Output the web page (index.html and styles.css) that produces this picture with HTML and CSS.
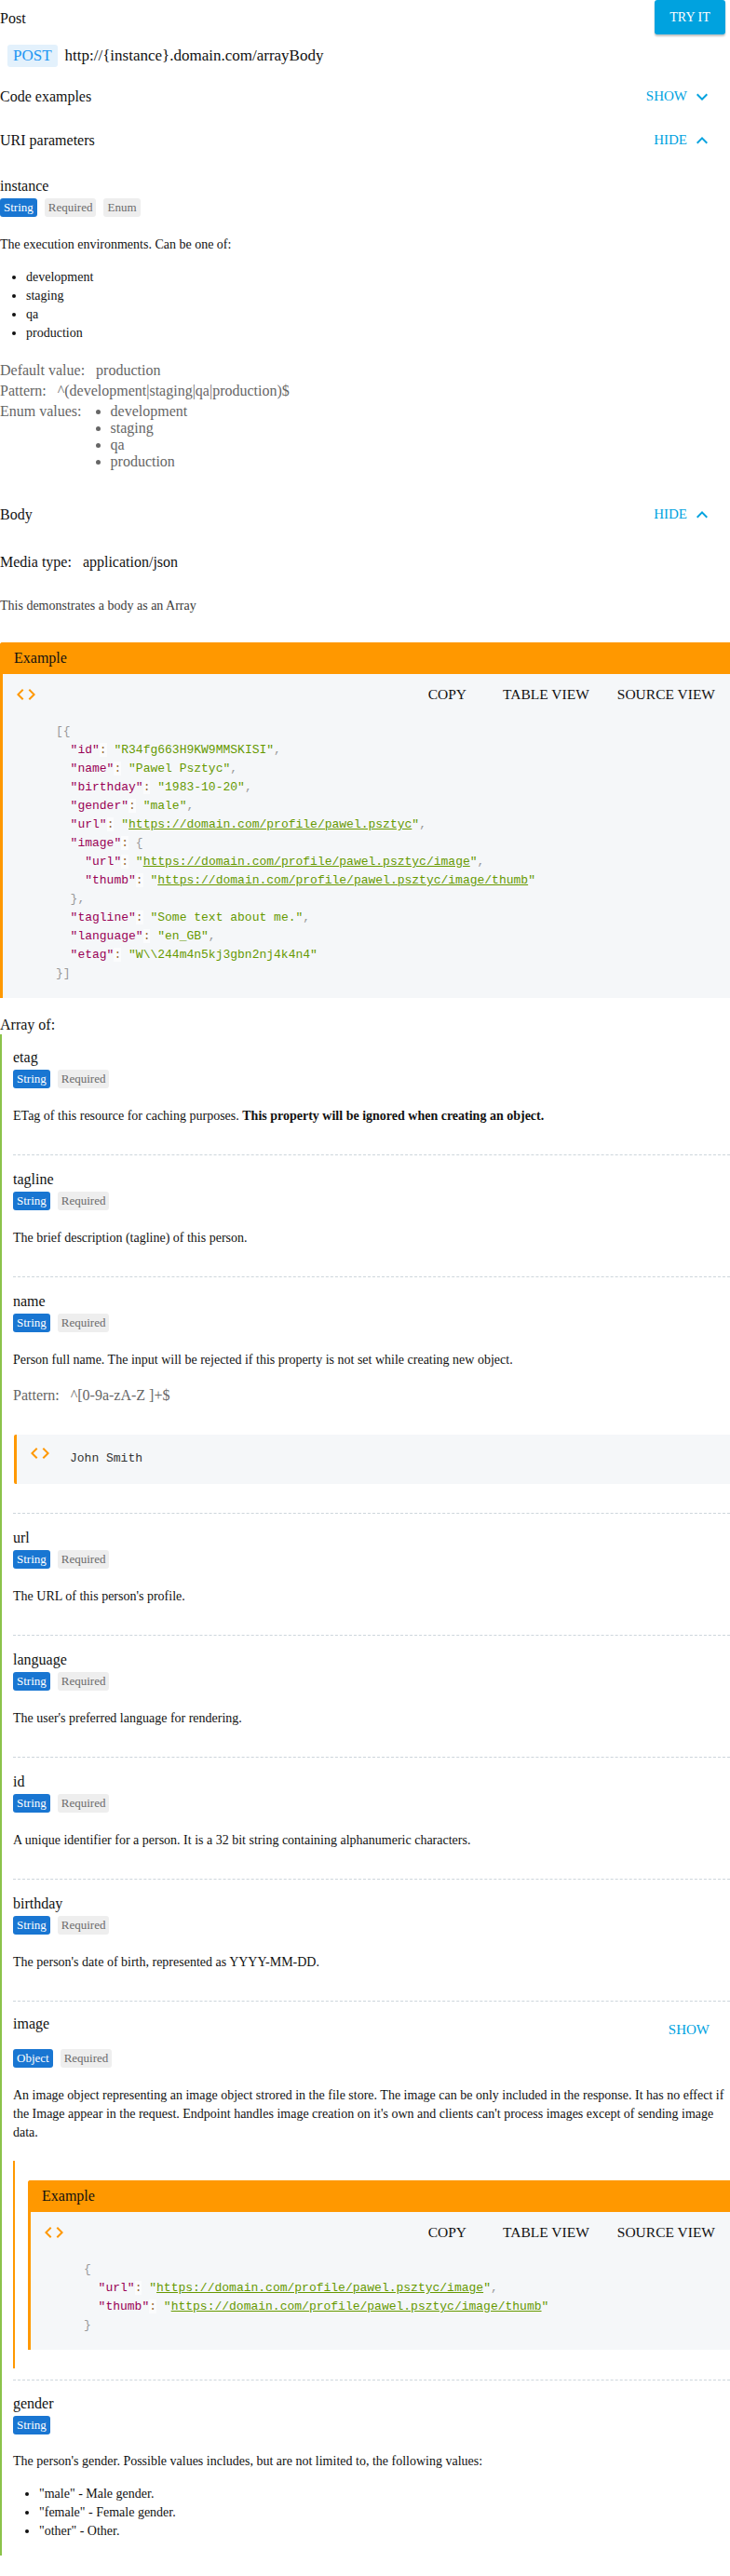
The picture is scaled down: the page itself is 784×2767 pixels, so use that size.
FILE: index.html
```html
<!DOCTYPE html>
<html lang="en">
<head>
<meta charset="utf-8">
<title>Post</title>
<link rel="stylesheet" href="styles.css">
</head>
<body>
<header class="top">
  <h1 class="title">Post</h1>
  <button class="try-it">TRY IT</button>
</header>
<div class="url-row">
  <span class="method">POST</span>
  <span class="url">http://{instance}.domain.com/arrayBody</span>
</div>

<div class="section-head first">
  <span class="section-title">Code examples</span>
  <span class="toggle">SHOW <svg viewBox="0 0 24 24"><path d="M16.59 8.59L12 13.17 7.41 8.59 6 10l6 6 6-6z"/></svg></span>
</div>
<div class="section-head">
  <span class="section-title">URI parameters</span>
  <span class="toggle">HIDE <svg viewBox="0 0 24 24"><path d="M12 8l-6 6 1.41 1.41L12 10.83l4.59 4.58L18 14z"/></svg></span>
</div>

<div class="param">
  <div class="prop-name">instance</div>
  <div class="badges"><span class="badge type">String</span><span class="badge flag">Required</span><span class="badge flag">Enum</span></div>
  <p class="prop-desc">The execution environments. Can be one of:</p>
  <ul class="text-list">
    <li>development</li>
    <li>staging</li>
    <li>qa</li>
    <li>production</li>
  </ul>
  <div class="details">
    <div class="detail-row"><span class="label">Default value:</span><span>production</span></div>
    <div class="detail-row"><span class="label">Pattern:</span><span>^(development|staging|qa|production)$</span></div>
    <div class="detail-row"><span class="label">Enum values:</span>
      <ul class="enum-list"><li>development</li><li>staging</li><li>qa</li><li>production</li></ul>
    </div>
  </div>
</div>

<div class="section-head body-head">
  <span class="section-title">Body</span>
  <span class="toggle">HIDE <svg viewBox="0 0 24 24"><path d="M12 8l-6 6 1.41 1.41L12 10.83l4.59 4.58L18 14z"/></svg></span>
</div>
<div class="media-row"><span class="label">Media type:</span><span>application/json</span></div>
<p class="media-desc">This demonstrates a body as an Array</p>

<section class="example main-example">
  <div class="example-head">Example</div>
  <div class="example-body">
    <div class="example-bar">
      <svg class="code-icon" viewBox="0 0 24 24"><path d="M9.4 16.6L4.8 12l4.6-4.6L8 6l-6 6 6 6 1.4-1.4zm5.2 0l4.6-4.6-4.6-4.6L16 6l6 6-6 6-1.4-1.4z"/></svg>
      <div class="actions"><button class="btn copy">Copy</button><button class="btn">Table view</button><button class="btn">Source view</button></div>
    </div>
<pre class="code"><span class="p">[{</span>
  <span class="k">"id"</span><span class="o">:</span> <span class="s">"R34fg663H9KW9MMSKISI"</span><span class="p">,</span>
  <span class="k">"name"</span><span class="o">:</span> <span class="s">"Pawel Psztyc"</span><span class="p">,</span>
  <span class="k">"birthday"</span><span class="o">:</span> <span class="s">"1983-10-20"</span><span class="p">,</span>
  <span class="k">"gender"</span><span class="o">:</span> <span class="s">"male"</span><span class="p">,</span>
  <span class="k">"url"</span><span class="o">:</span> <span class="s">"<a>https://domain.com/profile/pawel.psztyc</a>"</span><span class="p">,</span>
  <span class="k">"image"</span><span class="o">:</span> <span class="p">{</span>
    <span class="k">"url"</span><span class="o">:</span> <span class="s">"<a>https://domain.com/profile/pawel.psztyc/image</a>"</span><span class="p">,</span>
    <span class="k">"thumb"</span><span class="o">:</span> <span class="s">"<a>https://domain.com/profile/pawel.psztyc/image/thumb</a>"</span>
  <span class="p">},</span>
  <span class="k">"tagline"</span><span class="o">:</span> <span class="s">"Some text about me."</span><span class="p">,</span>
  <span class="k">"language"</span><span class="o">:</span> <span class="s">"en_GB"</span><span class="p">,</span>
  <span class="k">"etag"</span><span class="o">:</span> <span class="s">"W\\244m4n5kj3gbn2nj4k4n4"</span>
<span class="p">}]</span></pre>
  </div>
</section>

<div class="array-of">Array of:</div>
<div class="props">
  <div class="prop">
    <div class="prop-name">etag</div>
    <div class="badges"><span class="badge type">String</span><span class="badge flag">Required</span></div>
    <p class="prop-desc">ETag of this resource for caching purposes. <b>This property will be ignored when creating an object.</b></p>
  </div>
  <div class="prop">
    <div class="prop-name">tagline</div>
    <div class="badges"><span class="badge type">String</span><span class="badge flag">Required</span></div>
    <p class="prop-desc">The brief description (tagline) of this person.</p>
  </div>
  <div class="prop">
    <div class="prop-name">name</div>
    <div class="badges"><span class="badge type">String</span><span class="badge flag">Required</span></div>
    <p class="prop-desc">Person full name. The input will be rejected if this property is not set while creating new object.</p>
    <div class="pattern"><span class="label">Pattern:</span><span>^[0-9a-zA-Z ]+$</span></div>
    <div class="value-box">
      <svg class="code-icon" viewBox="0 0 24 24"><path d="M9.4 16.6L4.8 12l4.6-4.6L8 6l-6 6 6 6 1.4-1.4zm5.2 0l4.6-4.6-4.6-4.6L16 6l6 6-6 6-1.4-1.4z"/></svg>
      <pre class="value">John Smith</pre>
    </div>
  </div>
  <div class="prop">
    <div class="prop-name">url</div>
    <div class="badges"><span class="badge type">String</span><span class="badge flag">Required</span></div>
    <p class="prop-desc">The URL of this person's profile.</p>
  </div>
  <div class="prop">
    <div class="prop-name">language</div>
    <div class="badges"><span class="badge type">String</span><span class="badge flag">Required</span></div>
    <p class="prop-desc">The user's preferred language for rendering.</p>
  </div>
  <div class="prop">
    <div class="prop-name">id</div>
    <div class="badges"><span class="badge type">String</span><span class="badge flag">Required</span></div>
    <p class="prop-desc">A unique identifier for a person. It is a 32 bit string containing alphanumeric characters.</p>
  </div>
  <div class="prop">
    <div class="prop-name">birthday</div>
    <div class="badges"><span class="badge type">String</span><span class="badge flag">Required</span></div>
    <p class="prop-desc">The person's date of birth, represented as YYYY-MM-DD.</p>
  </div>
  <div class="prop prop-object">
    <div class="prop-head">
      <div class="prop-name">image</div>
      <span class="show-btn">SHOW</span>
    </div>
    <div class="badges"><span class="badge type">Object</span><span class="badge flag">Required</span></div>
    <p class="prop-desc">An image object representing an image object strored in the file store. The image can be only included in the response. It has no effect if the Image appear in the request. Endpoint handles image creation on it's own and clients can't process images except of sending image data.</p>
    <div class="obj-example">
      <section class="example">
        <div class="example-head">Example</div>
        <div class="example-body">
          <div class="example-bar">
            <svg class="code-icon" viewBox="0 0 24 24"><path d="M9.4 16.6L4.8 12l4.6-4.6L8 6l-6 6 6 6 1.4-1.4zm5.2 0l4.6-4.6-4.6-4.6L16 6l6 6-6 6-1.4-1.4z"/></svg>
            <div class="actions"><button class="btn copy">Copy</button><button class="btn">Table view</button><button class="btn">Source view</button></div>
          </div>
<pre class="code"><span class="p">{</span>
  <span class="k">"url"</span><span class="o">:</span> <span class="s">"<a>https://domain.com/profile/pawel.psztyc/image</a>"</span><span class="p">,</span>
  <span class="k">"thumb"</span><span class="o">:</span> <span class="s">"<a>https://domain.com/profile/pawel.psztyc/image/thumb</a>"</span>
<span class="p">}</span></pre>
        </div>
      </section>
    </div>
  </div>
  <div class="prop">
    <div class="prop-name">gender</div>
    <div class="badges"><span class="badge type">String</span></div>
    <p class="prop-desc gender-desc">The person's gender. Possible values includes, but are not limited to, the following values:</p>
    <ul class="text-list">
      <li>"male" - Male gender.</li>
      <li>"female" - Female gender.</li>
      <li>"other" - Other.</li>
    </ul>
  </div>
</div>
</body>
</html>
```

FILE: styles.css
```css
html, body {
  margin: 0;
  padding: 0;
}
body {
  width: 784px;
  font-family: "Liberation Serif", "Times New Roman", serif;
  font-size: 16px;
  color: #111;
  background: #fff;
  padding-bottom: 17px;
}
p, ul, h1, pre {
  margin: 0;
}

/* header */
.top {
  display: flex;
  justify-content: space-between;
  align-items: flex-start;
  height: 38px;
}
.title {
  font-size: 16px;
  font-weight: normal;
  line-height: 40px;
}
.try-it {
  width: 76px;
  height: 37px;
  margin-right: 5px;
  border: 0;
  border-radius: 3px;
  background: #00a2df;
  color: #fff;
  font-family: "Liberation Serif", "Times New Roman", serif;
  font-size: 14px;
  box-shadow: 0 2px 2px rgba(0, 0, 0, 0.24);
  padding: 0;
}
.url-row {
  display: flex;
  align-items: center;
  gap: 8px;
  margin-top: 10px;
  font-size: 17px;
}
.method {
  height: 24px;
  line-height: 24px;
  padding: 0 6px;
  margin-left: 8px;
  border-radius: 3px;
  background: #e3f1fc;
  color: #2196f3;
}

/* section headers */
.section-head {
  display: flex;
  align-items: center;
  justify-content: space-between;
  height: 47px;
}
.section-head.first {
  margin-top: 8px;
}
.section-head.body-head {
  margin-top: 24px;
}
.toggle {
  display: flex;
  align-items: center;
  color: #00a2df;
  font-size: 15px;
  margin-right: 18px;
}
.toggle svg {
  width: 24px;
  height: 24px;
  margin-left: 4px;
  fill: #00a2df;
}

/* params */
.param {
  margin-top: 16px;
}
.prop-name {
  font-size: 16px;
  line-height: 20px;
}
.badges {
  display: flex;
  gap: 8px;
  margin-top: 3px;
}
.badge {
  height: 20px;
  line-height: 20px;
  padding: 0 4px;
  font-size: 13px;
  border-radius: 3px;
}
.badge.type {
  background: #1976d2;
  color: #fff;
}
.badge.flag {
  background: #eeeeee;
  color: #6b6b6b;
}
.prop-desc {
  margin-top: 20px;
  font-size: 14px;
  line-height: 20px;
}
.text-list {
  margin-top: 15px;
  padding-left: 28px;
  font-size: 14px;
  line-height: 20px;
}
.details {
  margin-top: 19px;
  color: #666;
  font-size: 16px;
}
.detail-row {
  display: flex;
  align-items: flex-start;
  line-height: 22px;
}
.label {
  margin-right: 12px;
}
.enum-list {
  padding: 2px 0 0 19px;
  line-height: 18px;
}

/* body */
.media-row {
  display: flex;
  margin-top: 17px;
  line-height: 22px;
}
.media-desc {
  margin-top: 26px;
  font-size: 14px;
  line-height: 20px;
  color: #3a3a3a;
}

/* examples */
.example {
  border-left: 3px solid #ff9800;
  border-top-left-radius: 3px;
}
.main-example {
  margin-top: 29px;
}
.example-head {
  height: 34px;
  line-height: 34px;
  padding-left: 12px;
  margin-left: -3px;
  padding-left: 15px;
  background: #ff9800;
  font-size: 16px;
  color: #111;
  border-top-left-radius: 3px;
}
.example-body {
  background: #f5f7f9;
  padding-bottom: 16px;
}
.example-bar {
  display: flex;
  align-items: center;
  height: 44px;
  padding: 0 1px 0 13px;
}
.code-icon {
  width: 24px;
  height: 24px;
  fill: #ff9800;
  flex: none;
}
.actions {
  margin-left: auto;
  display: flex;
}
.btn {
  border: 0;
  background: none;
  padding: 0 15px;
  font-family: "Liberation Serif", "Times New Roman", serif;
  font-size: 15.5px;
  text-transform: uppercase;
  color: #111;
  line-height: 36px;
}
.btn.copy {
  margin-right: 9px;
}
.code {
  margin: 8px 0 0 57px;
  font-family: "Liberation Mono", "DejaVu Sans Mono", monospace;
  font-size: 13px;
  line-height: 20px;
  color: #333;
}
.code .p {
  color: #999;
}
.code .k {
  color: #990055;
}
.code .s {
  color: #669900;
}
.code .s a {
  color: #669900;
  text-decoration: underline;
}
.code .o {
  color: #9a6e3a;
  background: rgba(255, 255, 255, 0.6);
}

/* array properties */
.array-of {
  margin-top: 19px;
  font-size: 16px;
  line-height: 20px;
}
.props {
  border-left: 2px solid #8bc34a;
  padding-left: 12px;
  padding-bottom: 16px;
}
.prop {
  padding: 16px 0 31px;
  border-bottom: 1px dashed #cdd6dc;
}
.prop:first-child {
  padding-top: 15px;
}
.prop:last-child {
  border-bottom: 0;
  padding: 15px 0 0;
}
.gender-desc {
  margin-top: 19px;
}
.pattern {
  display: flex;
  margin-top: 17px;
  line-height: 22px;
  color: #666;
}
.value-box {
  display: flex;
  align-items: flex-start;
  height: 53px;
  box-sizing: border-box;
  margin-top: 31px;
  margin-left: 1px;
  padding: 8px 0 0 13px;
  border-left: 3px solid #ff9800;
  border-radius: 2px 0 0 2px;
  background: #f5f7f9;
}
.value {
  margin: 8px 0 0 20px;
  font-family: "Liberation Mono", "DejaVu Sans Mono", monospace;
  font-size: 13px;
  line-height: 20px;
  color: #333;
}
.prop-object {
  padding: 12px 0 12px;
}
.prop-head {
  display: flex;
  justify-content: space-between;
  align-items: flex-start;
}
.prop-head .prop-name {
  margin-top: 2px;
}
.show-btn {
  height: 36px;
  line-height: 36px;
  padding-right: 22px;
  color: #00a2df;
  font-size: 15px;
}
.obj-example {
  margin-top: 20px;
  border-left: 2px solid #ff9800;
  padding: 21px 0 20px 14px;
}
```
